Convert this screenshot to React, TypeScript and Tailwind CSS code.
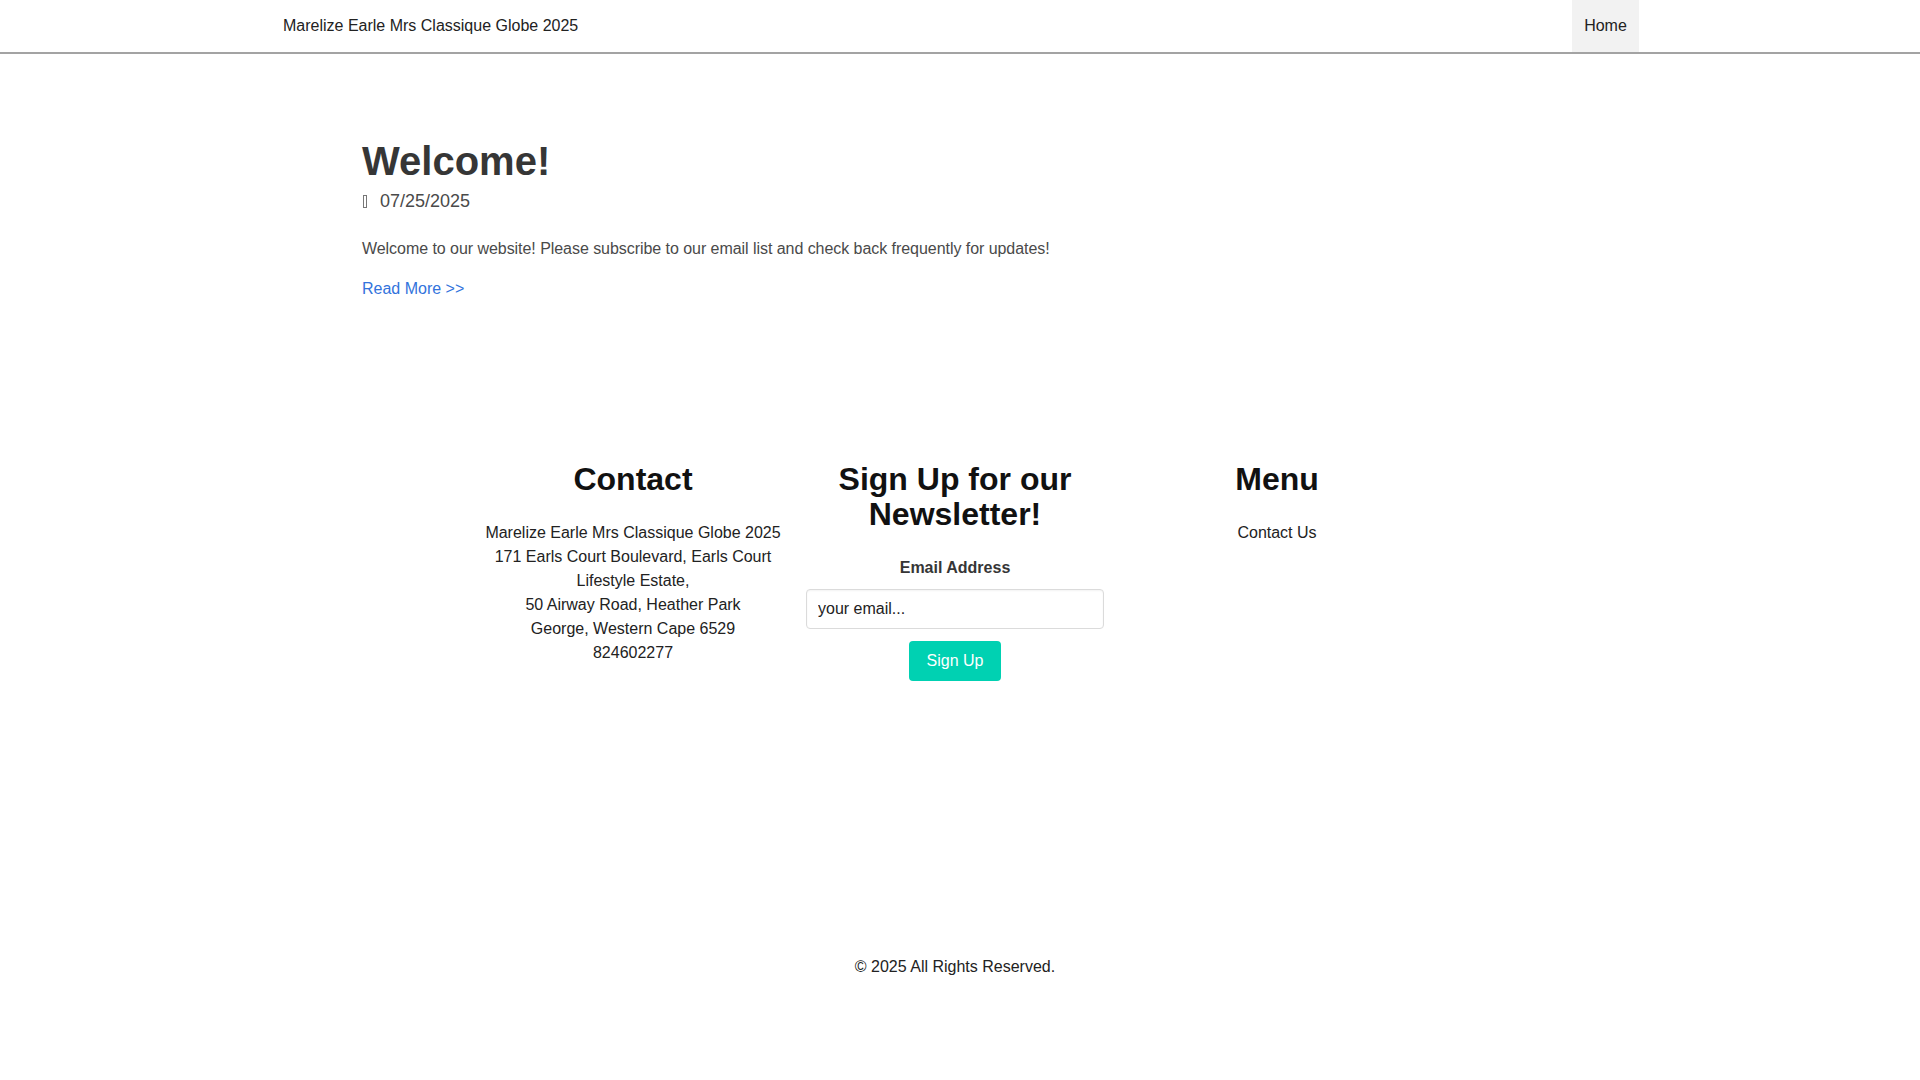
import React from "react";

const App = () => {
  return (
    <div className="min-h-[1080px] bg-white font-['Liberation_Sans',Arial,sans-serif] text-[16px] text-[#222]">
      {/* TOP NAV */}
      <nav className="h-[54px] border-b-2 border-[#a3a3a3]">
        <div className="w-[1358px] mx-auto pl-[2px] h-[52px] flex justify-between items-stretch">
          <a href="#" className="flex items-center text-[#222] leading-[24px]">
            Marelize Earle Mrs Classique Globe 2025
          </a>
          <a
            href="#"
            className="flex items-center justify-center w-[67px] bg-[#f2f2f2] text-[#222] leading-[24px]"
          >
            Home
          </a>
        </div>
      </nav>

      {/* POST */}
      <main className="w-[1200px] mx-auto pl-[2px] pt-[85px]">
        <h1 className="text-[40px] leading-[45px] font-bold text-[#363636]">
          Welcome!
        </h1>
        <div className="mt-[4px] flex items-center text-[18px] leading-[27px] text-[#4a4a4a]">
          <span className="inline-block w-[4px] h-[13px] border border-[#777] mr-[13px] ml-[1px]"></span>
          <span>07/25/2025</span>
        </div>
        <p className="mt-[22px] leading-[24px] text-[#4a4a4a] tracking-[-0.05px]">
          Welcome to our website! Please subscribe to our email list and check
          back frequently for updates!
        </p>
        <a href="#" className="block mt-[16px] leading-[24px] text-[#3273dc]">
          Read More &gt;&gt;
        </a>
      </main>

      {/* FOOTER */}
      <footer className="w-[976px] mx-auto pr-[10px] mt-[161px]">
        <div className="grid grid-cols-3 text-center">
          <div className="px-[12px]">
            <h2 className="text-[32px] leading-[35px] font-bold text-[#111] mb-[24px]">
              Contact
            </h2>
            <p className="leading-[24px] text-[#222]">
              Marelize Earle Mrs Classique Globe 2025
              <br />
              171 Earls Court Boulevard, Earls Court Lifestyle Estate,
              <br />
              50 Airway Road, Heather Park
              <br />
              George, Western Cape 6529
              <br />
              824602277
            </p>
          </div>

          <div className="px-[12px]">
            <h2 className="text-[32px] leading-[35px] font-bold text-[#111] mb-[24px]">
              Sign Up for our Newsletter!
            </h2>
            <form onSubmit={(e) => e.preventDefault()}>
              <label className="block font-bold leading-[24px] text-[#363636] mb-[9px]">
                Email Address
              </label>
              <input
                type="email"
                placeholder="your email..."
                className="block w-full h-[40px] px-[11px] border border-[#dbdbdb] rounded-[4px] text-[16px] text-[#222] placeholder:text-[#222] outline-none shadow-[inset_0_1px_2px_rgba(10,10,10,0.05)]"
              />
              <button
                type="submit"
                className="mt-[12px] w-[92px] h-[40px] rounded-[4px] bg-[#00d1b2] text-white leading-[24px]"
              >
                Sign Up
              </button>
            </form>
          </div>

          <div className="px-[12px]">
            <h2 className="text-[32px] leading-[35px] font-bold text-[#111] mb-[24px]">
              Menu
            </h2>
            <a href="#" className="block leading-[24px] text-[#222]">
              Contact Us
            </a>
          </div>
        </div>

        <p className="mt-[274px] text-center leading-[24px] text-[#222]">
          © 2025 All Rights Reserved.
        </p>
      </footer>
    </div>
  );
};

export default App;
